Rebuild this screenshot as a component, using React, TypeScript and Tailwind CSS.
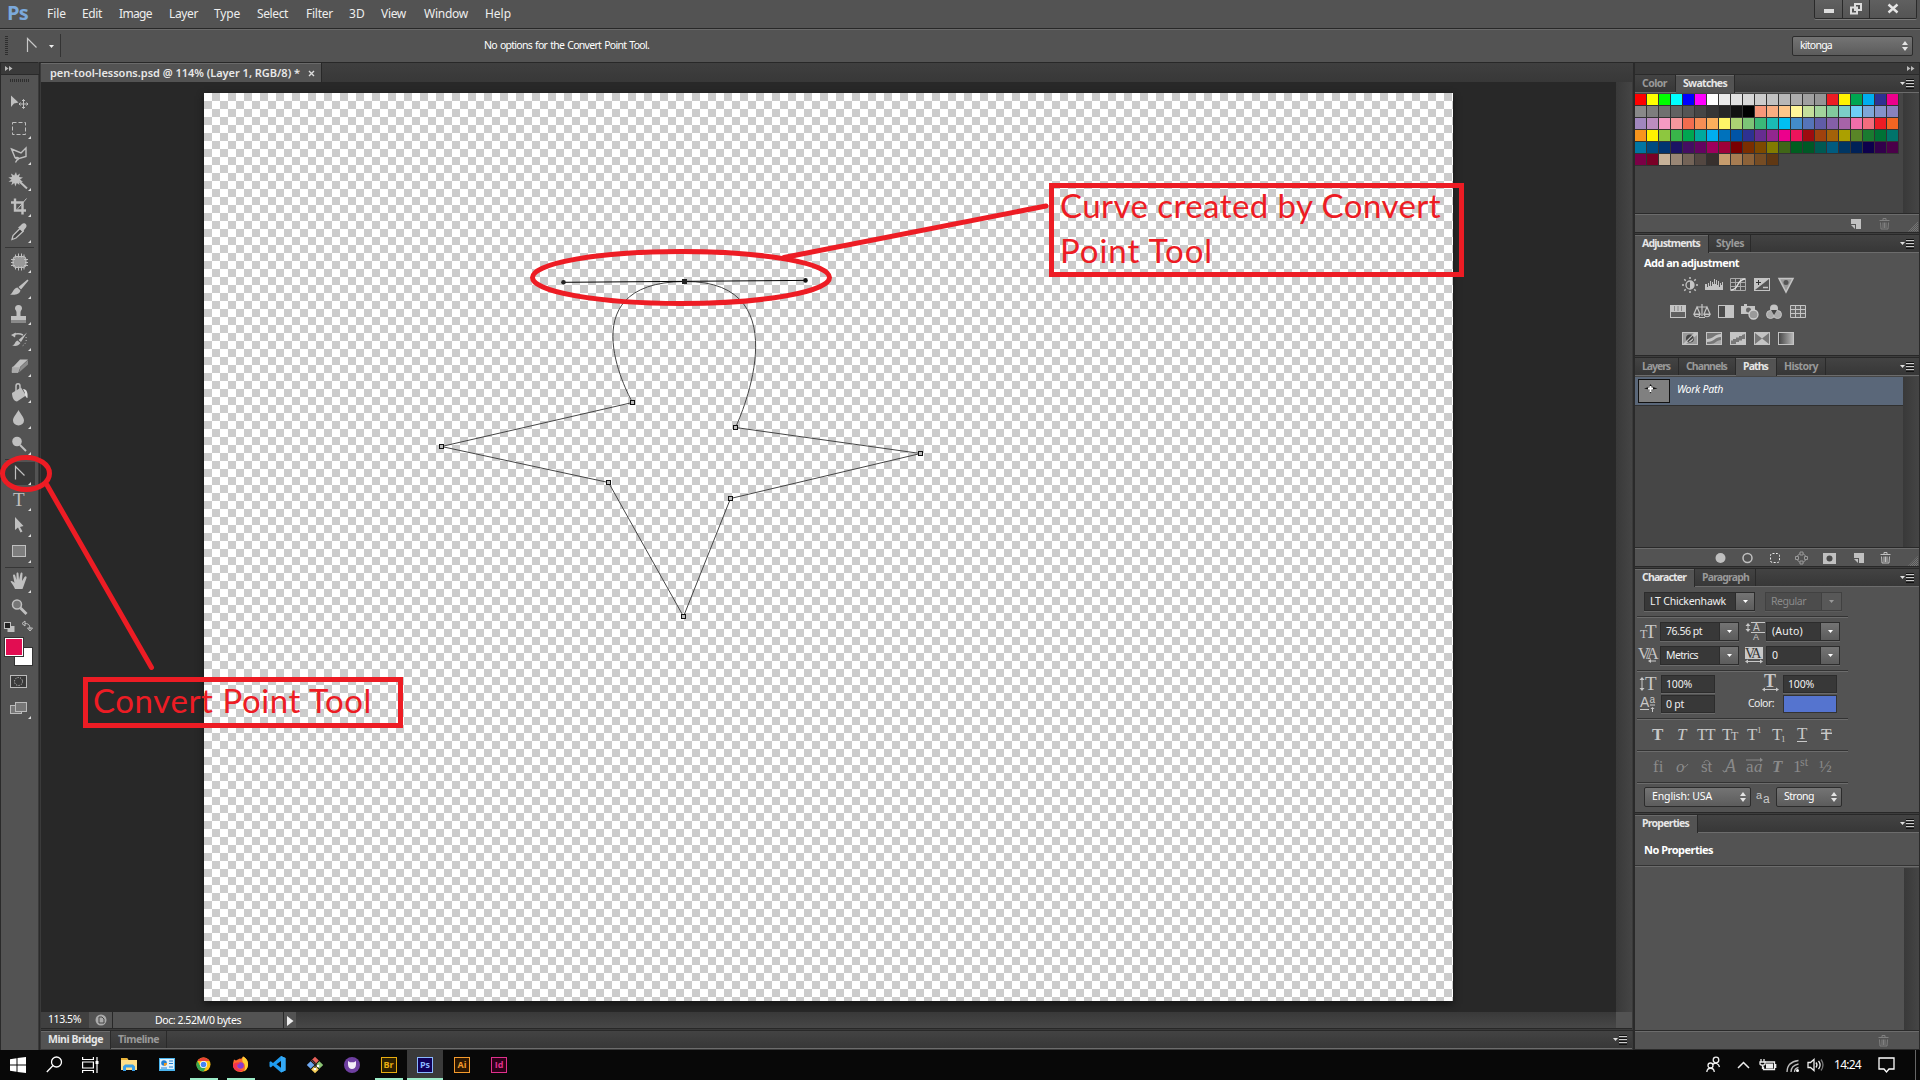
import React, { useLayoutEffect, useRef } from "react";

/* Text whose tracking is computed so that it fills a known width. */
function Fit({ w, className = "", children }: { w: number; className?: string; children: string }) {
  const ref = useRef<HTMLSpanElement>(null);
  useLayoutEffect(() => {
    const el = ref.current;
    if (!el) return;
    el.style.letterSpacing = "0px";
    const natural = el.getBoundingClientRect().width;
    el.style.letterSpacing = `${(w - natural) / children.length}px`;
  }, [w, children]);
  return (
    <span ref={ref} className={`inline-block shrink-0 whitespace-pre ${className}`}>
      {children}
    </span>
  );
}

const MENUS: [string, number, number][] = [
  ["File", 47, 19], ["Edit", 82, 20], ["Image", 119, 33], ["Layer", 169, 29], ["Type", 214, 26], ["Select", 257, 31],
  ["Filter", 306, 27], ["3D", 349, 16], ["View", 381, 25], ["Window", 424, 44], ["Help", 485, 26],
];

function MenuBar() {
  let x = 29;
  return (
    <header className="flex h-[28px] w-full shrink-0 bg-[#535353]">
      <span className="w-[29px] shrink-0 pl-[7px] font-['Open_Sans'] text-[20px] leading-[26px] font-bold text-[#7ba9dc]">
        <Fit w={21}>Ps</Fit>
      </span>
      {MENUS.map(([label, left, w]) => {
        const gap = left - x;
        x = left + w;
        return (
          <span key={label} className="flex text-[12px] leading-[28px] text-[#eee]" style={{ marginLeft: gap, width: w }}>
            <Fit w={w}>{label}</Fit>
          </span>
        );
      })}
      <div className="mr-[3px] ml-auto flex h-[19px] rounded-b-[2px] border border-t-0 border-[#2a2a2a] bg-linear-to-b from-[#606060] to-[#545454] shadow-[0_1px_0_#7a7a7a]">
        <div className="flex w-[28px] items-end justify-center border-r border-[#2a2a2a] pb-[5px]"><div className="h-[4px] w-[10px] bg-[#ddd]" /></div>
        <div className="w-[27px] border-r border-[#2a2a2a]">
          <svg width="26" height="18" fill="none" stroke="#ddd" strokeWidth="2"><path d="M12 4h6v6h-6zM8 7.500h6v6h-6z" fill="#535353" /></svg>
        </div>
        <div className="w-[46px]">
          <svg width="46" height="18" stroke="#e6e6e6" strokeWidth="2.400"><path d="M18.500 4.500l9 8M27.500 4.500l-9 8" /></svg>
        </div>
      </div>
    </header>
  );
}

function UpDown() {
  return <svg width="6" height="10" className="shrink-0" fill="#e4e4e4"><path d="M3 0l3 4H0zM3 10L0 6h6z" /></svg>;
}

function OptionsBar() {
  return (
    <div className="flex h-[34px] w-full shrink-0 items-center border-t border-[#282828] bg-[#535353] shadow-[inset_0_1px_0_#6a6a6a]">
      <div className="ml-[5px] h-[20px] w-[3px] bg-[repeating-linear-gradient(#2e2e2e_0_1px,#535353_1px_2px)]" />
      <svg width="36" height="20" className="ml-[14px]">
        <path d="M5.500 16V2.500l9 9" fill="none" stroke="#c8c8c8" strokeWidth="1.200" />
        <path d="M27 9h5l-2.500 3z" fill="#eee" />
      </svg>
      <div className="ml-[2px] h-[23px] w-[1px] bg-[#333]" />
      <div className="ml-[423px] text-[10.5px] text-white [word-spacing:1px]"><Fit w={165}>No options for the Convert Point Tool.</Fit></div>
      <div className="mr-[7px] ml-auto flex h-[20px] w-[121px] items-center justify-between rounded-[2px] border border-[#2c2c2c] bg-linear-to-b from-[#747474] to-[#5c5c5c] pr-[4px] pl-[7px] text-[10.5px] text-white">
        <Fit w={32}>kitonga</Fit>
        <UpDown />
      </div>
    </div>
  );
}

const G = "#c0c0c0";
const serif = "font-['Liberation_Serif']";

type Tool = { icon: React.ReactNode; more?: boolean; active?: boolean };

/* Tool glyphs are drawn in a 37 by 26 slot. */
const TOOLS: (Tool | null)[] = [
  { icon: <><path d="M10 6.500v11.500l3-3.500 4.500-1z" fill={G} /><path d="M22.500 10.500v9M18 15h9M21 12l1.500-1.500L24 12M21 18l1.500 1.500L24 18M19.500 13.500L18 15l1.500 1.500M25.500 13.500L27 15l-1.500 1.500" fill="none" stroke={G} /></> },
  { more: true, icon: <rect x="11.500" y="7.500" width="13" height="12" fill="none" stroke={G} strokeDasharray="4 2" /> },
  { more: true, icon: <path d="M10.500 8l9.500 4 5-5v8.500l-8.500 2.500-2.500-1.500zM14 17.500c3-3 5 1 2 1.500l-1.500 2.500" fill="none" stroke={G} strokeWidth="1.400" /> },
  { more: true, icon: <><path d="M15 5l1 3.500 3-2-1 3.500 4 .5-3 2 3 2.500-4-.3 .5 3.300-2.700-2-1.500 3.500-1-3.500-3 2.200 1-3.500-3.800 0 3-2.200-3.200-2 3.700-.5-1-3.500 3.200 2z" fill={G} /><path d="M18.500 14.500l7.500 7" stroke={G} strokeWidth="2" /></> },
  { more: true, icon: <><path d="M14 5.500v12h11M10 9.500h11.500v12" fill="none" stroke={G} strokeWidth="2.400" /><path d="M25.500 5.500l-9 10.500" stroke={G} /></> },
  { more: true, icon: <><path d="M11 20.500l1-4 7-7 3 3-7 6.500z" fill="#444" stroke={G} strokeWidth="1.300" /><path d="M17 8.500l2-1.500 2-2c2-2 6 .5 4 3.500l-2 2.500-.5 2z" fill={G} /></> },
  null,
  { more: true, icon: <><rect x="12" y="7.500" width="13" height="11" rx="3" fill="#999" stroke={G} /><path d="M14.500 5.500v3M17.500 4.500v4M20.500 4.500v4M23 5.500v3M14.500 17.500v3M17.500 17.500v4M20.500 17.500v4M23 17.500v3M10 10.500h4M10 13.500h3M10 16.500h4M23 10.500h4M24 13.500h3M23 16.500h4" stroke={G} /></> },
  { more: true, icon: <path d="M26.500 4.500l1 1-7.500 9-2.500-2.500zM16.500 12.500l3 3c-1 4-6 5-10.500 4 3-.5 2.500-6 7.500-7z" fill={G} /> },
  { more: true, icon: <path d="M14 7.500a3.500 3.500 0 117 0c0 1.500-1.500 2-1.500 4v3.500H25v4.500H10V15h5.500v-3.500c0-2-1.500-2.500-1.500-4zM10 20.500h15v1H10z" fill={G} /> },
  { more: true, icon: <><path d="M26 5.500l-6 9.500-2.500-2zM16.500 13.500l3 2.500c-2 3-5 3.500-8.500 2.500 3 0 2.500-4 5.500-5z" fill={G} /><path d="M12 8c4-2 7-1.500 10 0" fill="none" stroke={G} strokeWidth="1.500" /><path d="M15 5.500l-5 2.500 4 2.500z" fill={G} /><path d="M25 10c1 5-1 8-5 9.500" fill="none" stroke={G} strokeDasharray="1 2" /></> },
  { more: true, icon: <><path d="M19 6.500h8l-8 7.500h-7z" fill={G} /><path d="M11.500 14h7.500l-2 5.500h-6z" fill="#aaa" stroke={G} strokeWidth=".6" /><path d="M19.500 14L27 7v4.500l-9 8z" fill="#8b8b8b" /></> },
  { more: true, icon: <><path d="M11 14l9-5.500 5 8-9 6c-3 0-5-4-5-8.500z" fill={G} /><path d="M15 14V7c0-3 4-3 4 0v5.500" fill="none" stroke={G} strokeWidth="1.500" /><path d="M22 10c4 0 5 4 4.500 9-2-.5-3-4-2.500-5z" fill="#ddd" /></> },
  { more: true, icon: <path d="M17.500 5c2 4 5.500 7 5.500 10.500a5.500 5 0 01-11 0C12 12 15.500 9 17.500 5z" fill={G} /> },
  { more: true, icon: <><circle cx="16" cy="10.500" r="4.800" fill={G} /><path d="M19 14l6 6" stroke={G} strokeWidth="2" /></> },
  null,
  { more: true, active: true, icon: <path d="M14.500 18.500V5.500l9 9" fill="none" stroke={G} strokeWidth="1.200" /> },
  { more: true, icon: <text x="12" y="19" fontSize="19" fill={G} className={serif}>T</text> },
  { more: true, icon: <path d="M14 4v13l3-2.500 2.500 5 2-1-2.500-4.500 3.500-1z" fill={G} /> },
  { more: true, icon: <rect x="11.500" y="6.500" width="13" height="11" fill="#7d7d7d" stroke={G} /> },
  null,
  { more: true, icon: <path d="M14 20c-1-3-3-5-4.500-7.500 1-1.500 3 0 4 1.500L12 6.500c0-1.500 2-1.500 2.200 0L15.500 11V4.500c0-1.500 2-1.500 2 0L18 11l1.500-6.500c.5-1.500 2.200-1 2 .5L21 12l2.500-4c1-1.500 2.500-.5 2 1l-2.500 7-1.500 4z" fill={G} /> },
  { icon: <><circle cx="16" cy="9.500" r="4.500" fill="#777" stroke={G} strokeWidth="1.500" /><path d="M19.500 13l6 6" stroke={G} strokeWidth="2.800" /></> },
];

function ToolPanel() {
  return (
    <aside className="flex w-[40px] shrink-0 flex-col border-x border-[#2a2a2a] bg-[#535353] shadow-[inset_-1px_0_0_#3a3a3a,inset_0_1px_0_#282828]">
      <div className="mt-[1px] flex h-[12px] w-[38px] shrink-0 items-center border-b border-[#2a2a2a] bg-[#3a3a3a] pl-[4px]">
        <svg width="8" height="5" fill="#bbb"><path d="M0 0l3.500 2.500L0 5zM4 0l3.500 2.500L4 5z" /></svg>
      </div>
      <div className="mt-[4px] mb-[7px] ml-[9px] h-[3px] w-[20px] shrink-0 bg-[repeating-linear-gradient(90deg,#2e2e2e_0_1px,#535353_1px_2px)]" />
      {TOOLS.map((tool, i) =>
        tool ? (
          <div key={i} className={tool.active ? "h-[26px] w-[37px] shrink-0 bg-[linear-gradient(#383838,#383838)] bg-size-[30px_23px] bg-position-[4px_1px] bg-no-repeat" : "h-[26px] w-[37px] shrink-0"}>
            <svg width="37" height="26">
              <g>{tool.icon}</g>
              {tool.more && <path d="M30 21v3h-3z" fill="#ddd" />}
            </svg>
          </div>
        ) : (
          <div key={i} className="mt-[2px] mb-[1px] ml-[4px] h-[1px] w-[29px] shrink-0 bg-[#363636]" />
        )
      )}
      <svg width="37" height="105" className="-mt-[2px] shrink-0">
        <rect x="6.500" y="7" width="7" height="6" fill="#c0c0c0" />
        <rect x="3.500" y="3.500" width="6" height="6" fill="#222" stroke="#c0c0c0" />
        <path d="M24 4.500c4 0 5 2 5 6M24 2l-3 2.500L24 7zM26.500 9h5L29 12z" fill="none" stroke="#c0c0c0" />
        <rect x="13.500" y="28.500" width="18" height="18" fill="#fff" stroke="#333" />
        <rect x="3" y="18" width="20" height="20" fill="#333" />
        <rect x="4.500" y="19.500" width="17" height="17" fill="#e20d52" stroke="#fff" />
        <rect x="9.500" y="56.500" width="16" height="12" fill="#3a3a3a" stroke="#bbb" />
        <circle cx="17.500" cy="62.500" r="4" fill="none" stroke="#ddd" strokeDasharray="1 1.500" />
        <rect x="9.500" y="86.500" width="11" height="8" fill="#777" stroke="#bbb" />
        <rect x="14.500" y="83.500" width="11" height="9" fill="#777" stroke="#bbb" />
        <path d="M30 97v3h-3z" fill="#ddd" />
      </svg>
    </aside>
  );
}

function PanelMenu() {
  return (
    <svg width="15" height="10" className="mr-[4px] ml-auto shrink-0">
      <path d="M0 3h5l-2.500 3z" fill="#ddd" />
      <path d="M6 .5h8M6 3.500h8M6 6.500h8M6 9.500h8" stroke="#111" />
      <path d="M6 1.500h8M6 4.500h8M6 7.500h8" stroke="#ccc" />
    </svg>
  );
}

/* Each tab: label, tab width, text width. */
function Tabs({ items, active }: { items: [string, number, number][]; active: string }) {
  return (
    <div className="flex h-[18px] shrink-0 items-center border-b border-[#6c6c6c] bg-linear-to-b from-[#434343] to-[#373737]">
      {items.map(([label, w, tw]) => (
        <div
          key={label}
          style={{ width: w }}
          className={
            label === active
              ? "-mb-[1px] h-[18px] shrink-0 border-r border-[#2a2a2a] bg-[#535353] pl-[7px] text-[10.5px] leading-[17px] font-bold text-[#e6e6e6] shadow-[inset_0_1px_0_#6a6a6a]"
              : "h-[17px] shrink-0 border-r border-[#2a2a2a] pl-[7px] text-[10.5px] leading-[17px] font-bold text-[#999]"
          }
        >
          <Fit w={tw}>{label}</Fit>
        </div>
      ))}
      <PanelMenu />
    </div>
  );
}

function Gap() {
  return <div className="h-[3px] shrink-0 border-y border-[#282828] bg-[#3d3d3d]" />;
}

const SWATCHES = `ff0000 ffff00 00ff00 00ffff 0000ff ff00ff ffffff ebebeb e1e1e1 d7d7d7 cccccc c2c2c2 b7b7b7 acacac a0a0a0 959595 ed1c24 fff200 00a651 00aeef 2e3192 ec008c
898989 7d7d7d 707070 626262 555555 464646 363636 262626 111111 000000 f7977a f9ad81 fdc68a fff79a c4df9b a2d39c 82ca9d 7bcdc8 6ecff6 7ea7d8 8493ca 8882be
a187be bc8dbf f49ac2 f6989d f26c4f f68e55 fbaf5c fff467 acd373 7cc576 3bb878 1abbb4 00bff3 438cca 5574b9 605ca8 855fa8 a763a8 f06ea9 f26d7d ed1c24 f26522
f7941d fff200 8dc73f 39b54a 00a651 00a99d 00aeef 0072bc 0054a6 2e3192 662d91 92278f ec008c ed145b 9e0b0f a0410d a36209 aba000 598527 1a7b30 007236 00746b
0076a3 004b80 003471 1b1464 440e62 630460 9e005d 9e0039 790000 7b2e00 7d4900 827b00 406618 005e20 005826 005952 005b7f 003663 002157 0d004c 32004b 4b0049
7b0046 7a0026 c7b299 998675 736357 534741 37302d c69c6d a67c52 8c6239 754c24 603813`.split(/\s+/);

function TrashIcon({ dim }: { dim?: boolean }) {
  return (
    <svg width="12" height="12" fill="none" stroke={dim ? "#808080" : "#c0c0c0"}>
      <path d="M.5 2.500h10M4 2V.5h3V2M1.500 4.500l.5 6.500h7l.5-6.500M4 4.500V10M5.500 4.500V10M7 4.500V10" />
    </svg>
  );
}
function NewIcon() {
  return <svg width="11" height="12" fill="#c0c0c0"><path d="M0 1h10v10H5V6H0zM0 7h4v4z" /></svg>;
}
function Grip() {
  return <div className="mt-[6px] h-[10px] w-[10px] bg-[repeating-conic-gradient(#777_0_25%,#535353_0_50%)] bg-size-[2px_2px] [clip-path:polygon(100%_0,100%_100%,0_100%)]" />;
}

function SwatchesPanel() {
  return (
    <>
      <Tabs active="Swatches" items={[["Color", 41, 25], ["Swatches", 59, 44]]} />
      <div className="flex h-[120px] shrink-0 bg-[#464646]">
        <div className="w-[268px] pt-[1px]">
          <div className="grid w-[264px] grid-cols-22">
            {SWATCHES.map((c, i) => (
              <div key={i} className="h-[12px] w-[12px] border-r border-b border-[#333]" style={{ background: `#${c}` }} />
            ))}
          </div>
        </div>
        <div className="w-[16px] bg-linear-to-r from-[#393939] to-[#454545]" />
      </div>
      <div className="flex h-[19px] shrink-0 items-center border-t border-[#2a2a2a] pt-[1px] pr-[1px] shadow-[inset_0_1px_0_#6c6c6c]">
        <div className="ml-[216px] w-[28px]"><NewIcon /></div>
        <TrashIcon dim />
        <div className="ml-auto"><Grip /></div>
      </div>
      <Gap />
    </>
  );
}

const L = "#c4c4c4";
const box = <rect x=".5" y="1.500" width="15" height="12" fill="#777" stroke={L} />;
const ADJUST: { pad: string; icons: React.ReactNode[] }[] = [
  {
    pad: "pl-[47px]",
    icons: [
      <><circle cx="8" cy="8" r="4" fill="none" stroke={L} strokeWidth="1.300" /><path d="M8 4a4 4 0 010 8z" fill={L} /><path d="M8 0v2M8 14v2M0 8h2M14 8h2M2.300 2.300l1.400 1.400M12.300 12.300l1.400 1.400M2.300 13.700l1.400-1.400M12.300 3.700l1.400-1.400" stroke={L} strokeWidth="1.500" /></>,
      <path d="M-1 13h18v-8h-1v3h-1V6h-1v4h-1V4h-1v4h-1V3h-1v4H9V2H8v5H7V5H6v4H5V4H4v5H3V6H2v4H1V7H-1z" fill={L} />,
      <><path d="M.5 1.500h15v12H.5zM5.500 1v13M10.500 1v13M0 5.500h16M0 9.500h16" fill="none" stroke="#aaa" /><path d="M1 13c8 0 5-10 14-11" fill="none" stroke="#ddd" strokeWidth="1.500" /></>,
      <><rect x="0" y="1" width="16" height="13" fill={L} /><path d="M1 13L15 2v11z" fill="#555" /><path d="M2 5.500h5M4.500 3v5" stroke="#333" /><path d="M9 10.500h5" stroke={L} strokeWidth="1.500" /></>,
      <><path d="M1 1.500h14L8 15z" fill="#999" stroke={L} strokeWidth="1.500" /><circle cx="8" cy="5.500" r="2.500" fill="#555" /></>,
    ],
  },
  {
    pad: "pl-[35px]",
    icons: [
      <>{box}<rect x="1" y="2" width="14" height="6" fill={L} /><path d="M4.500 2v5M8 2v5M11.500 2v5" stroke="#888" /><rect x="1" y="8" width="14" height="5" fill="#606060" /></>,
      <path d="M8 0v12M3 3h10M3 3l-3 7h6zM13 3l-3 7h6zM0 10.500c1 3 5 3 6 0zM10 10.500c1 3 5 3 6 0zM5 13.500h6" fill="none" stroke={L} strokeWidth="1.200" />,
      <>{box}<rect x="1" y="2" width="6" height="11" fill="#4a4a4a" /><rect x="7" y="1" width="9" height="13" fill={L} /></>,
      <><path d="M-1 2h3V0h3v2h8v8H-1z" fill={L} /><circle cx="6.500" cy="6" r="2.500" fill="#666" /><circle cx="11.500" cy="10.500" r="4.500" fill="#999" stroke="#d0d0d0" strokeWidth="1.300" /></>,
      <><circle cx="8" cy="4.500" r="4" fill={L} /><circle cx="4.500" cy="10.500" r="4" fill="#aaa" stroke={L} /><circle cx="11.500" cy="10.500" r="4" fill="#aaa" stroke={L} /><path d="M5 6h6l-3 5z" fill="#444" /></>,
      <path d="M.5 1.500h15v12H.5zM5.500 1v13M10.500 1v13M0 5.500h16M0 9.500h16" fill="#666" stroke={L} />,
    ],
  },
  {
    pad: "pl-[47px]",
    icons: [
      <>{box}<rect x="1" y="2" width="14" height="11" fill="#999" /><circle cx="8" cy="7.500" r="4" fill="#444" /><path d="M5 10.500l6-6c2 4-2 8-6 6zM1 13h3L15 4V2l-3 0z" fill={L} /></>,
      <>{box}<path d="M1 8c6 0 8-5 14-5v3C9 6 8 11 1 11z" fill={L} /><path d="M4 13c6 0 6-4 11-4v4z" fill="#aaa" /></>,
      <>{box}<path d="M1 2h14v1l-3 1v1H9v1.500H6V8H3v1.500H1zM15 6v2h-3v1.500H9V11H6v2h9z" fill={L} /></>,
      <>{box}<path d="M1 2l7 5.500L15 2zM1 13l7-5.500L15 13z" fill={L} /></>,
      <><defs><linearGradient id="ramp"><stop stopColor="#444" /><stop offset="1" stopColor="#bbb" /></linearGradient></defs><rect x=".5" y="1.500" width="15" height="12" fill="url(#ramp)" stroke={L} /></>,
    ],
  },
];

function AdjustmentsPanel() {
  return (
    <>
      <Tabs active="Adjustments" items={[["Adjustments", 74, 58], ["Styles", 42, 28]]} />
      <div className="h-[102px] shrink-0">
        <div className="pl-[9px] text-[11px] leading-[20px] font-bold text-white"><Fit w={95}>Add an adjustment</Fit></div>
        {ADJUST.map((row, r) => (
          <div key={r} className={`flex h-[27px] items-start gap-[8px] pt-[4px] ${row.pad}`}>
            {row.icons.map((icon, i) => <svg key={i} width="16" height="16" className="overflow-visible">{icon}</svg>)}
          </div>
        ))}
      </div>
      <Gap />
    </>
  );
}

function PathsPanel() {
  return (
    <>
      <Tabs active="Paths" items={[["Layers", 44, 28], ["Channels", 57, 41], ["Paths", 41, 25], ["History", 49, 34]]} />
      <div className="flex h-[171px] shrink-0 bg-[#464646] pt-[1px]">
        <div className="w-[268px]">
          <div className="flex h-[29px] items-center border-b border-[#303030] bg-[#5a6779]">
            <svg width="32" height="24" className="-mt-[1px] ml-[3px]">
              <rect x=".5" y=".5" width="31" height="23" fill="#808080" stroke="#111" />
              <path d="M6 9.500l5-1.500 1.500-3 2 3 5 1.500-5 1-2 4-1.500-4z" fill="#111" />
              <path d="M10 9.500h5M12.500 7v6" stroke="#fff" strokeWidth="2" />
            </svg>
            <span className="-mt-[3px] ml-[7px] text-[10.5px] text-white italic"><Fit w={46}>Work Path</Fit></span>
          </div>
        </div>
        <div className="w-[16px] bg-linear-to-r from-[#393939] to-[#454545]" />
      </div>
      <div className="flex h-[19px] shrink-0 items-center border-t border-[#2a2a2a] pt-[2px] pr-[1px] shadow-[inset_0_1px_0_#6c6c6c]">
        <svg width="136" height="14" className="ml-[80px]">
          <circle cx="5.500" cy="7" r="5" fill="#c0c0c0" />
          <circle cx="32.500" cy="7" r="4.500" fill="none" stroke="#c0c0c0" strokeWidth="1.500" />
          <rect x="55.500" y="2.500" width="9" height="9" rx="2" fill="none" stroke="#eee" strokeDasharray="2 1.500" />
          <circle cx="86.500" cy="7" r="4.500" fill="none" stroke="#999" />
          <path d="M85 1h3v3h-3zM85 10h3v3h-3zM80.500 5.500h3v3h-3zM89.500 5.500h3v3h-3z" fill="#535353" stroke="#999" />
          <rect x="108" y="2" width="13" height="11" fill="#c0c0c0" />
          <circle cx="114.500" cy="7.500" r="3" fill="#4a4a4a" />
        </svg>
        <div className="ml-[3px] w-[26px]"><NewIcon /></div>
        <TrashIcon />
        <div className="ml-auto"><Grip /></div>
      </div>
      <Gap />
    </>
  );
}

function Combo({ w, tw, arrow, dim, children }: { w: number; tw: number; arrow: number; dim?: boolean; children: string }) {
  return (
    <div
      style={{ width: w }}
      className={dim
        ? "flex h-[19px] shrink-0 items-stretch border border-[#414141] bg-[#4c4c4c] pl-[5px] text-[10.5px] leading-[17px] text-[#8a8a8a] shadow-[0_1px_0_#5c5c5c]"
        : "flex h-[19px] shrink-0 items-stretch border border-[#2c2c2c] bg-[#383838] pl-[5px] text-[10.5px] leading-[17px] text-[#f0f0f0] shadow-[0_1px_0_#6a6a6a]"}
    >
      <Fit w={tw}>{children}</Fit>
      <div style={{ width: arrow }} className={dim ? "ml-auto flex items-center justify-center border-l border-[#414141] bg-[#585858]" : "ml-auto flex items-center justify-center border-l border-[#2c2c2c] bg-linear-to-b from-[#747474] to-[#5c5c5c]"}>
        <svg width="5" height="3"><path d="M0 0h5L2.500 3z" fill={dim ? "#999" : "#fff"} /></svg>
      </div>
    </div>
  );
}

function Field({ tw, children }: { tw: number; children: string }) {
  return (
    <div className="h-[18px] w-[54px] shrink-0 border border-[#2c2c2c] bg-[#383838] pl-[4px] text-[10.5px] leading-[17px] text-[#f0f0f0] shadow-[0_1px_0_#6a6a6a]">
      <Fit w={tw}>{children}</Fit>
    </div>
  );
}

function Divider() {
  return <div className="ml-[2px] h-[2px] w-[211px] shrink-0 border-t border-[#333] bg-[#6c6c6c]" />;
}

function Glyph({ w, children }: { w: number; children: React.ReactNode }) {
  return <svg width={w} height="19" fill="#c8c8c8" stroke="none" className="shrink-0 overflow-visible font-['Liberation_Serif']">{children}</svg>;
}

function Select({ w, tw, children }: { w: number; tw: number; children: string }) {
  return (
    <div style={{ width: w }} className="flex h-[20px] shrink-0 items-center justify-between rounded-[2px] border border-[#2c2c2c] bg-linear-to-b from-[#747474] to-[#5c5c5c] pr-[4px] pl-[7px] text-[10.5px] text-white">
      <Fit w={tw}>{children}</Fit>
      <UpDown />
    </div>
  );
}

function CharacterPanel() {
  return (
    <>
      <Tabs active="Character" items={[["Character", 60, 44], ["Paragraph", 61, 47]]} />
      <div className="flex h-[225px] shrink-0 flex-col">
        <div className="mt-[5px] flex gap-[10px] pl-[9px]">
          <Combo w={111} tw={76} arrow={19}>LT Chickenhawk</Combo>
          <Combo w={77} tw={35} arrow={20} dim>Regular</Combo>
        </div>
        <div className="mt-[5px]"><Divider /></div>
        <div className="mt-[4px] flex">
          <Glyph w={25}><text x="5" y="16" fontSize="12">T</text><text x="10" y="16" fontSize="19">T</text></Glyph>
          <Combo w={79} tw={36} arrow={19}>76.56 pt</Combo>
          <Glyph w={27}><text x="14" y="8.500" fontSize="10" className="font-['Liberation_Sans']">A</text><text x="14" y="18" fontSize="9" className="font-['Liberation_Sans']">A</text><path d="M12 10h14v1H12zM12 0h14v1H12zM9 1l2.500 3h-2v3h2L9 10 6.500 7h2V4h-2z" /></Glyph>
          <Combo w={74} tw={31} arrow={19}>(Auto)</Combo>
        </div>
        <div className="mt-[5px] flex">
          <Glyph w={25}><text x="3" y="13" fontSize="16" letterSpacing="-3.500">V/A</text><path d="M13 15l3-2v1.500h5v1h-5V17z" /></Glyph>
          <Combo w={79} tw={32} arrow={19}>Metrics</Combo>
          <Glyph w={27}><rect x="6" y="1" width="18" height="12" /><text x="6" y="12" fontSize="14" letterSpacing="-2" fill="#333">VA</text><path d="M6 15.500l3-2v1.500h12v-1.500l3 2-3 2V16H9v1.500z" /></Glyph>
          <Combo w={74} tw={6} arrow={19}>0</Combo>
        </div>
        <div className="mt-[5px]"><Divider /></div>
        <div className="mt-[3px] flex">
          <Glyph w={26}><text x="10" y="15" fontSize="19">T</text><path d="M7 2l2.500 3h-2v8h2L7 16l-2.500-3h2V5h-2z" /></Glyph>
          <Field tw={26}>100%</Field>
          <Glyph w={68}><text x="49" y="12" fontSize="18" fontWeight="bold">T</text><path d="M47 14.500l3-2V14h11v-1.500l3 2-3 2V15H50v1.500z" /></Glyph>
          <Field tw={26}>100%</Field>
        </div>
        <div className="mt-[1px] flex">
          <Glyph w={26}><text x="5" y="12" fontSize="14" className="font-['Liberation_Sans']">A</text><text x="14.500" y="8" fontSize="10" className="font-['Liberation_Sans']">a</text><path d="M5 14h9v1H5zM15 9.500h5v1h-5zM17.500 12l2 2H18v3h-1v-3h-1.500z" /></Glyph>
          <Field tw={18}>0 pt</Field>
          <span className="w-[68px] pl-[33px] text-[10.5px] leading-[16px] text-[#eee]"><Fit w={26}>Color:</Fit></span>
          <div className="h-[18px] w-[54px] border border-[#333] bg-[#5574cf]" />
        </div>
        <div className="mt-[4px]"><Divider /></div>
        <svg width="212" height="30" className="shrink-0 font-['Liberation_Serif']" fill="#c8c8c8" fontSize="17">
          <text x="17" y="20" fontWeight="bold">T</text>
          <text x="42" y="20" fontStyle="italic">T</text>
          <text x="62" y="20" fontSize="16" letterSpacing="-1">TT</text>
          <text x="87" y="20">T</text><text x="96" y="20" fontSize="12">T</text>
          <text x="112" y="20">T</text><text x="122" y="13" fontSize="9">1</text>
          <text x="137" y="20">T</text><text x="146" y="22" fontSize="9">1</text>
          <text x="162" y="19">T</text><path d="M162 21h10v1h-10z" />
          <text x="186" y="20">T</text><path d="M186 12.500h11v1.500h-11z" />
        </svg>
        <Divider />
        <svg width="212" height="30" className="shrink-0 font-['Liberation_Serif']" fill="#8a8a8a" fontSize="17">
          <text x="18" y="20">fi</text>
          <text x="41" y="20" fontStyle="italic">o</text><path d="M47 14c2 2 4 1 6-2" fill="none" stroke="#8a8a8a" />
          <text x="66" y="20">st</text><path d="M69 11c0-4 6-3 6 1" fill="none" stroke="#8a8a8a" />
          <text x="90" y="20" fontStyle="italic" fontSize="18">A</text><path d="M88 18c0 3 3 2 4 0" fill="none" stroke="#8a8a8a" />
          <text x="111" y="20">a</text><text x="119" y="20" fontStyle="italic">a</text><path d="M111 7.500h14v-2l3 2.500-3 2v-1.500h-14z" />
          <text x="137" y="20" fontStyle="italic" fontWeight="bold">T</text>
          <text x="158" y="20">1</text><text x="165" y="14" fontSize="12">st</text>
          <text x="184" y="20">½</text>
        </svg>
        <Divider />
        <div className="mt-[3px] flex pl-[9px]">
          <Select w={107} tw={60}>English: USA</Select>
          <svg width="25" height="20" fill="#c8c8c8" className="font-['Liberation_Sans']"><text x="5" y="12" fontSize="11">a</text><text x="12" y="16" fontSize="12">a</text></svg>
          <Select w={66} tw={30}>Strong</Select>
        </div>
      </div>
      <Gap />
    </>
  );
}

function PropertiesPanel() {
  return (
    <>
      <Tabs active="Properties" items={[["Properties", 63, 47]]} />
      <div className="h-[32px] shrink-0 pl-[9px] text-[11px] leading-[33px] font-bold text-white"><Fit w={69}>No Properties</Fit></div>
      <div className="flex h-[165px] shrink-0 border-t border-[#333] shadow-[inset_0_1px_0_#6c6c6c]">
        <div className="mt-[2px] ml-[269px] w-[15px] bg-linear-to-r from-[#393939] to-[#454545]" />
      </div>
      <div className="flex h-[20px] shrink-0 items-center border-y border-[#2a2a2a] pt-[1px] pl-[243px] shadow-[inset_0_1px_0_#6c6c6c]"><TrashIcon dim /></div>
    </>
  );
}

function Document() {
  return (
    <section className="flex w-[1593px] shrink-0 flex-col border-t border-[#282828] bg-[#3a3a3a] pl-[1px]">
      <div className="flex h-[19px] shrink-0 bg-linear-to-b from-[#3f3f3f] to-[#383838]">
        <div className="flex w-[281px] items-center border-r border-[#282828] bg-[#535353] pt-[1px] pl-[9px] text-[11px] font-semibold text-[#e8e8e8] shadow-[inset_0_1px_0_#6a6a6a]">
          <Fit w={250}>pen-tool-lessons.psd @ 114% (Layer 1, RGB/8) *</Fit>
          <svg width="7" height="7" className="ml-[8px]" stroke="#ddd" strokeWidth="1.400"><path d="M1 1l5 5M6 1L1 6" /></svg>
        </div>
      </div>
      <div className="flex h-[930px] w-[1591px] shrink-0">
        <div className="h-[930px] w-[1575px] overflow-hidden bg-[#282828] pt-[11px] pl-[163px]">
          <div className="h-[908px] w-[1249px] bg-[conic-gradient(#ccc_25%,#fff_0_50%,#ccc_0_75%,#fff_0)] bg-size-[16px_16px] shadow-[0_3px_7px_#141414]" />
        </div>
        <div className="w-[16px] bg-linear-to-r from-[#393939] to-[#454545]" />
      </div>
      <div className="flex h-[17px] w-[1591px] shrink-0 border-b border-[#282828] bg-linear-to-b from-[#393939] to-[#474747] text-[10.5px] leading-[16px] text-white">
        <div className="w-[48px] bg-[#404040] pl-[7px] leading-[15px]"><Fit w={33}>113.5%</Fit></div>
        <div className="flex w-[24px] items-center justify-center border-r border-[#282828] bg-[#535353]">
          <svg width="12" height="12"><circle cx="6" cy="6" r="5.500" fill="#aaa" /><path d="M4 3h3l2 2v4H4z" fill="none" stroke="#444" /></svg>
        </div>
        <div className="w-[171px] border-r border-[#282828] bg-[#535353] pl-[42px]"><Fit w={86}>Doc: 2.52M/0 bytes</Fit></div>
        <div className="w-[12px] bg-[#535353] pt-[4px] pl-[3px]"><svg width="7" height="10" fill="#eee"><path d="M0 0l6.500 5L0 10z" /></svg></div>
        <div className="ml-auto w-[16px] bg-[#535353]" />
      </div>
      <div className="h-[2px] shrink-0 border-b border-[#282828]" />
      <div className="h-[18px] w-[1591px]"><Tabs active="Mini Bridge" items={[["Mini Bridge", 70, 55], ["Timeline", 56, 41]]} /></div>
    </section>
  );
}

function AdobeIcon({ label, color, bg }: { label: string; color: string; bg: string }) {
  return (
    <div className="flex h-[16px] w-[16px] items-center justify-center border font-['Open_Sans'] text-[9px] leading-none font-bold" style={{ color, background: bg, borderColor: color }}>
      {label}
    </div>
  );
}

const TASKS: { w: number; bar?: string; active?: boolean; icon: React.ReactNode }[] = [
  { w: 36, icon: <svg width="16" height="16" fill="#fff"><path d="M0 2.300l6.500-1v6.200H0zM7.500 1.100L16 0v7.500H7.500zM0 8.500h6.500v6.200L0 13.700zM7.500 8.500H16V16l-8.500-1.100z" /></svg> },
  { w: 36, icon: <svg width="17" height="17" fill="none" stroke="#fff" strokeWidth="1.300"><circle cx="10.500" cy="6" r="5" /><path d="M7 9.500L.8 16" /></svg> },
  { w: 37, icon: <svg width="17" height="16" fill="none" stroke="#fff" strokeWidth="1.200"><path d="M.6 0v2.500h10.800V0M.6 5h10.800v6H.6zM.6 16v-2.500h10.800V16M15 0v16" /><path d="M13.500 4h3v3h-3z" fill="#fff" stroke="none" /></svg> },
  { w: 39, icon: <svg width="16" height="15"><path d="M0 1h6l1.500 2H16v10H0z" fill="#ffe08a" /><path d="M0 1h6l1 2H0z" fill="#e8b339" /><path d="M2 14V9.500L4 7.500h8l2 2V14h-3v-3.500H5V14z" fill="#3aa0e8" /></svg> },
  { w: 37, icon: <svg width="16" height="13"><rect width="16" height="13" fill="#4ab4ee" /><rect x="1" y="1" width="14" height="10" fill="#dff2fd" /><circle cx="5" cy="5" r="2.800" fill="#1f7fd4" /><path d="M5 5h3a3 3 0 01-3 3z" fill="#f29a1f" /><path d="M10 3h4M10 5.500h4M2 10h6M10 9h4" stroke="#1f7fd4" /></svg> },
  { w: 37, bar: "w-[28px]", icon: <svg width="15" height="15" viewBox="-7.500 -7.500 15 15"><circle r="7" fill="#fbbf12" /><path d="M-6.100-3.500A7 7 0 016.100-3.500H0z" fill="#ea4335" /><path d="M-6.100-3.500A7 7 0 000 7l3-5.200-6 0z" fill="#34a853" /><circle r="3.600" fill="#fff" /><circle r="2.800" fill="#4285f4" /></svg> },
  { w: 37, bar: "w-[28px]", icon: <svg width="17" height="17"><path d="M2 3.500l2 1c2-1 3-2 4-2 1 .5 2 0 3-2 4 2 5.500 5.500 5 9-.6 4-4 6.500-7.500 6.500C4 16 1 13 1 9c0-2 .5-3.500 1-5.500z" fill="#ff6a2b" /><path d="M11 .5c4 2 5.500 5 5 9-.5 3-2 5-4 6 2-4 1-8-1-9-1-2-1-4 0-6z" fill="#ffcf33" /><circle cx="8.500" cy="9.500" r="3.300" fill="#8a3bd0" /><path d="M1 9c0 5 6 8 10 5-4 0-7-2-6-5 .5-1 2-1 3-1-2-2-5-2-7 1z" fill="#f5334f" /></svg> },
  { w: 37, icon: <svg width="17" height="17"><path d="M12 0l4.500 2v12.500L12 16.500 4 9.500 1.800 11.500.5 10.500V6l1.300-.8L4 7zM12 5L7.500 8.300 12 11.800z" fill="#1f9cf0" fillRule="evenodd" /><path d="M12 0l4.500 2v12.500L12 16.500z" fill="#35a9f5" /></svg> },
  { w: 37, icon: <svg width="18" height="18" viewBox="-9 -9 18 18"><g transform="rotate(45)"><rect x="-5.800" y="-5.800" width="5.400" height="5.400" fill="#e8605a" /><rect x=".4" y="-5.800" width="5.400" height="5.400" fill="#8cc474" /><rect x="-5.800" y=".4" width="5.400" height="5.400" fill="#6fa8f0" /><rect x=".4" y=".4" width="5.400" height="5.400" fill="#f6cf5a" /></g><path d="M-3-5L0-2v6M0-1l3 2" fill="none" stroke="#222" strokeWidth="1.300" /><circle cy="4" r="1.300" fill="#fff" /><circle cx="3" cy="1" r="1.300" fill="#fff" /></svg> },
  { w: 37, icon: <svg width="16" height="16"><circle cx="8" cy="8" r="8" fill="#6e3fa0" /><path d="M4 4l2 1.200h4L12 4v3.500c0 3-2 4.500-4 4.500s-4-1.500-4-4.500z" fill="#f3eef8" /></svg> },
  { w: 37, bar: "w-[28px]", icon: <AdobeIcon label="Br" color="#e8ac10" bg="#2c2000" /> },
  { w: 36, bar: "w-[36px]", active: true, icon: <AdobeIcon label="Ps" color="#8ab8ff" bg="#10005a" /> },
  { w: 38, icon: <AdobeIcon label="Ai" color="#f59b2c" bg="#2c1600" /> },
  { w: 36, icon: <AdobeIcon label="Id" color="#e0308c" bg="#2c0018" /> },
];

function Taskbar() {
  return (
    <footer className="flex h-[30px] w-full shrink-0 bg-[#080808]">
      {TASKS.map((t, i) => (
        <div key={i} style={{ width: t.w }} className={t.active ? "flex h-[30px] shrink-0 flex-col items-center bg-[#3a3a3a]" : "flex h-[30px] shrink-0 flex-col items-center"}>
          <div className="flex h-[28px] items-center pt-[1px]">{t.icon}</div>
          {t.bar && <div className={`h-[2px] bg-[#9cecc8] ${t.bar}`} />}
        </div>
      ))}
      <div className="ml-auto flex h-[30px] items-center">
        <svg width="127" height="30" fill="none" stroke="#eee" strokeWidth="1.300">
          <circle cx="10" cy="10" r="2.800" /><circle cx="4.500" cy="15.500" r="2.500" /><path d="M.8 22c.5-5 7-5 7.500 0M6.800 14.500c2-2.500 6-1 6.700 2.500" />
          <path d="M32 18l5.500-5.500 5.500 5.500" strokeWidth="1.500" />
          <path d="M59 12h9.500v7.500H57.500v-3M69.700 14v4" /><path d="M60 13.500h7v5h-7z" fill="#eee" stroke="none" /><path d="M55 9v3M58 9v3M54 12h5v2c0 1.500-5 1.500-5 0zM56.500 15v4" />
          <path d="M81 22c0-6 4-10.500 11.500-11.500M85 22c0-4 2.500-7 7.500-8M88.500 22c0-2 1.500-4 4-4.500" stroke="#bbb" /><circle cx="91.500" cy="20.500" r="1.500" fill="#fff" stroke="none" />
          <path d="M102 12.500h2.500l3.500-3v11l-3.500-3H102zM110 12.500c1.200 1.500 1.200 3.500 0 5M112.500 11c2 2.500 2 5.500 0 8" /><path d="M115 9.500c2.500 3.500 2.500 7.500 0 11" stroke="#777" />
        </svg>
        <span className="ml-[-1px] pl-[2px] text-[12px] text-white"><Fit w={27}>14:24</Fit></span>
        <svg width="18" height="18" className="ml-[17px]" fill="none" stroke="#fff" strokeWidth="1.300"><path d="M1 2h15v11h-5l-2.500 3L6 13H1z" /></svg>
        <div className="ml-[19px] h-[30px] w-[1px] bg-[#666]" />
        <div className="w-[4px]" />
      </div>
    </footer>
  );
}

const ANCHORS = [[632, 402], [441, 446], [608, 482], [683, 616], [730, 498], [920, 453], [735, 427]];

/* Vector path on the canvas and the red call-outs drawn over the window. */
function Annotations() {
  return (
    <div className="pointer-events-none absolute inset-0 font-['Lato'] text-[33px] leading-[45px] text-[#ed1c24]">
      <svg width="1920" height="1080" className="absolute inset-0" fill="none">
        <path d="M632.500 402.500C632.500 402.500 563.500 282.300 684.500 281.500C805.500 280.400 735.500 427.500 735.500 427.500L920.500 453.500L730.500 498.500L683.500 616.500L608.500 482.500L441.500 446.500Z" stroke="#444" />
        {ANCHORS.map(([x, y]) => <rect key={x} x={x - 1.5} y={y - 1.5} width="4" height="4" fill="#bbb" stroke="#111" />)}
        <path d="M563.500 282.300L805.500 280.400" stroke="#000" />
        <rect x="682" y="279" width="5" height="5" fill="#222" />
        <circle cx="563.500" cy="282.300" r="2.300" fill="#222" />
        <circle cx="805.500" cy="280.400" r="2.300" fill="#111" />
        <g stroke="#ed1c24" strokeWidth="5" strokeLinecap="round">
          <ellipse cx="681" cy="277.500" rx="148.500" ry="26" />
          <path d="M784 257.500L1046 206" />
          <ellipse cx="26" cy="473.500" rx="23.500" ry="16" />
          <path d="M47 485L151.500 667.500" />
        </g>
      </svg>
      <div className="absolute top-[183px] left-[1049px] flex h-[94px] w-[415px] flex-col items-start border-[5px] border-[#ed1c24] pl-[6px]">
        <Fit w={381} className="-mt-[5px]">Curve created by Convert</Fit>
        <Fit w={153}>Point Tool</Fit>
      </div>
      <div className="absolute top-[677px] left-[83px] flex h-[51px] w-[320px] items-start border-[5px] border-[#ed1c24] pl-[5px]">
        <Fit w={279} className="-mt-[4px]">Convert Point Tool</Fit>
      </div>
    </div>
  );
}

export default function App() {
  return (
    <div className="relative flex h-[1080px] w-[1920px] flex-col overflow-hidden bg-[#535353] font-['Noto_Sans',sans-serif]">
      <MenuBar />
      <OptionsBar />
      <main className="flex h-[988px] shrink-0">
        <ToolPanel />
        <Document />
        <aside className="flex w-[287px] shrink-0 flex-col border-t border-r border-l-2 border-[#2a2a2a] bg-[#535353]">
          <div className="flex h-[12px] shrink-0 items-center justify-end border-b border-[#2a2a2a] bg-[#3a3a3a] pr-[4px]">
            <svg width="8" height="5" fill="#bbb"><path d="M0 0l3.500 2.500L0 5zM4 0l3.500 2.500L4 5z" /></svg>
          </div>
          <SwatchesPanel />
          <AdjustmentsPanel />
          <PathsPanel />
          <CharacterPanel />
          <PropertiesPanel />
        </aside>
      </main>
      <Taskbar />
      <Annotations />
    </div>
  );
}
